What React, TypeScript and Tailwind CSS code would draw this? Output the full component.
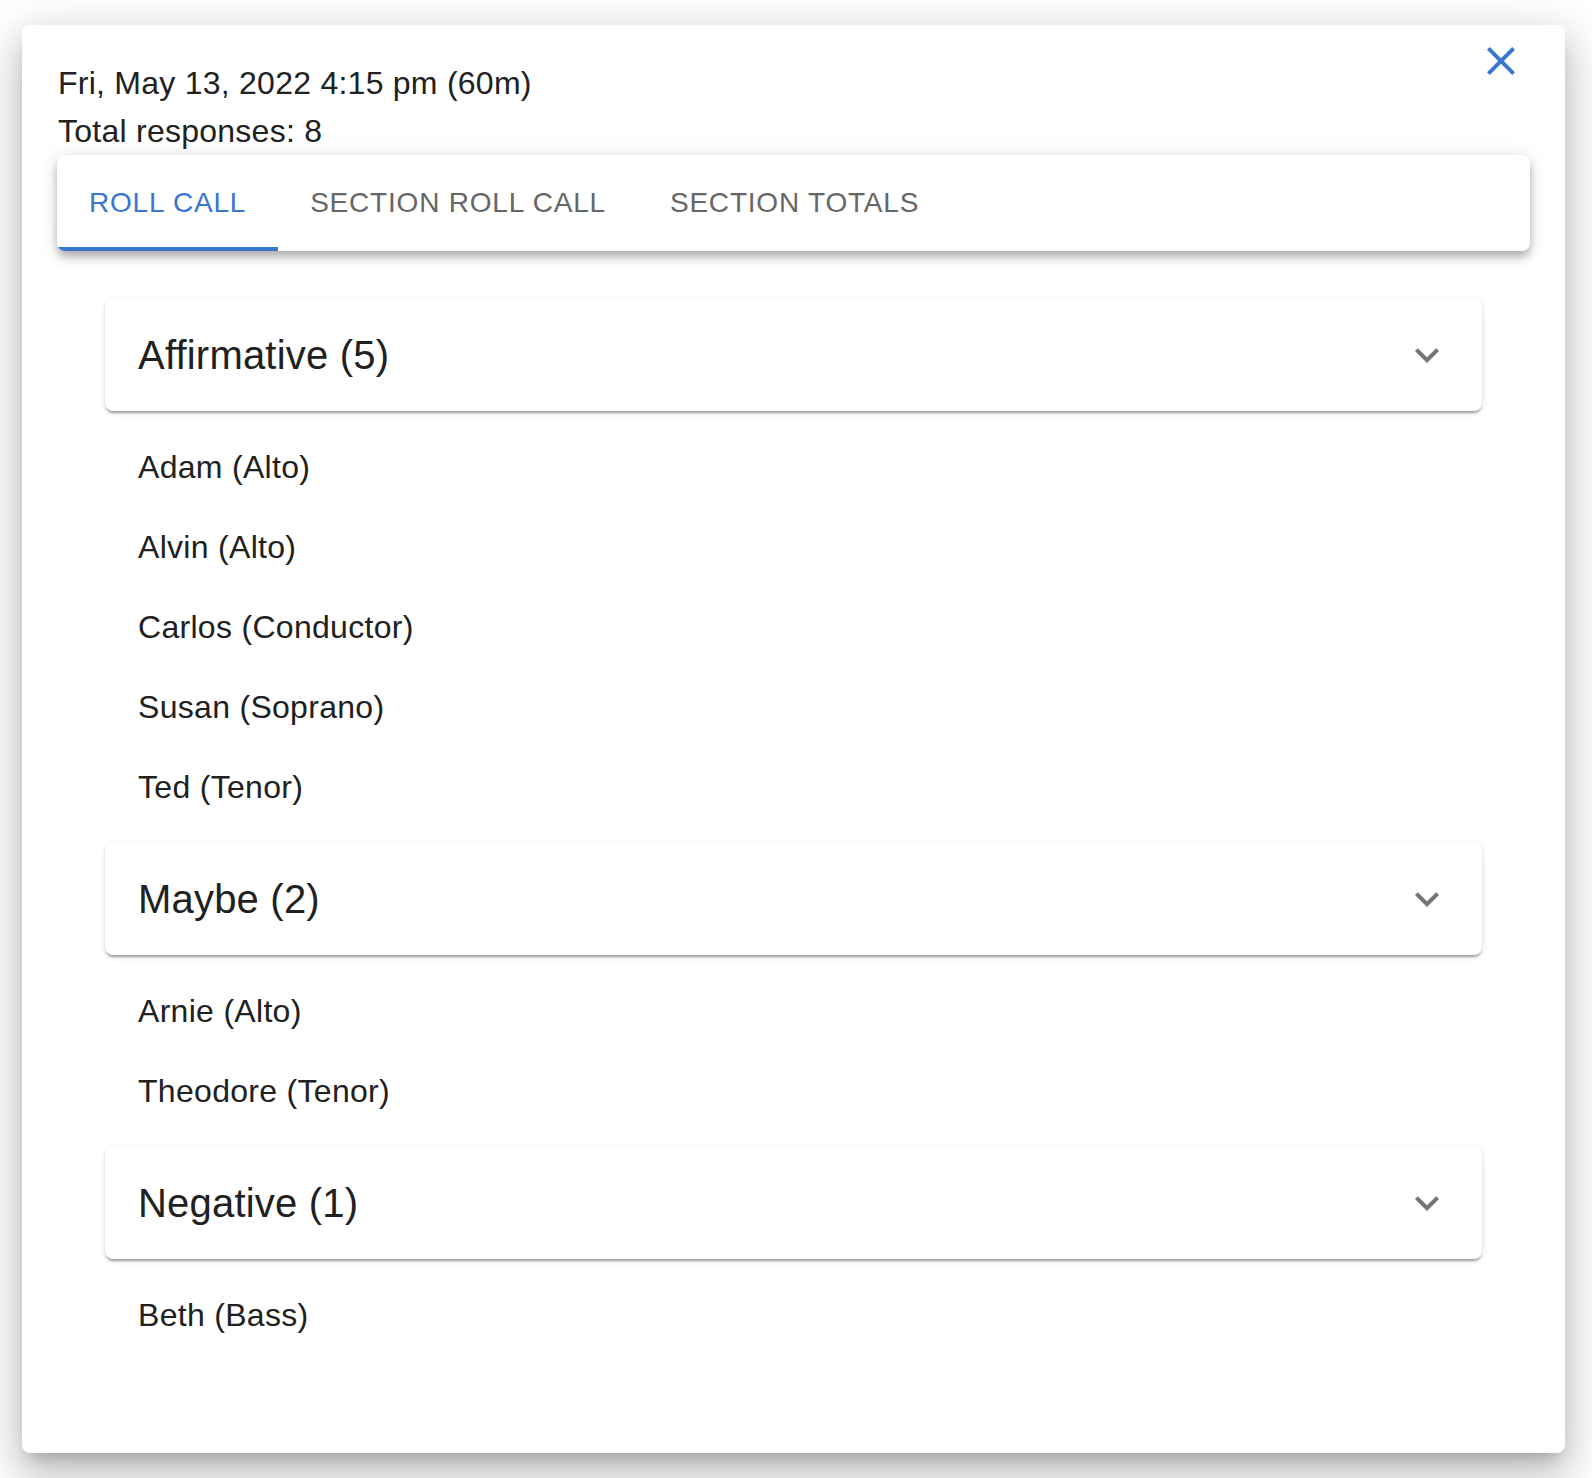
import type { JSX } from 'react'

interface Group {
  label: string
  members: string[]
}

const GROUPS: Group[] = [
  {
    label: 'Affirmative (5)',
    members: ['Adam (Alto)', 'Alvin (Alto)', 'Carlos (Conductor)', 'Susan (Soprano)', 'Ted (Tenor)'],
  },
  { label: 'Maybe (2)', members: ['Arnie (Alto)', 'Theodore (Tenor)'] },
  { label: 'Negative (1)', members: ['Beth (Bass)'] },
]

const TABS = ['ROLL CALL', 'SECTION ROLL CALL', 'SECTION TOTALS']

function CloseIcon(): JSX.Element {
  return (
    <svg viewBox="0 0 24 24" className="h-12 w-12 fill-[#3976d0]">
      <path d="M19 6.41 17.59 5 12 10.59 6.41 5 5 6.41 10.59 12 5 17.59 6.41 19 12 13.41 17.59 19 19 17.59 13.41 12z" />
    </svg>
  )
}

function ExpandIcon(): JSX.Element {
  return (
    <svg viewBox="0 0 24 24" className="h-12 w-12 fill-[#757575]">
      <path d="M16.59 8.59 12 13.17 7.41 8.59 6 10l6 6 6-6z" />
    </svg>
  )
}

function GroupSection({ group }: { group: Group }): JSX.Element {
  return (
    <section>
      <div className="flex h-[112px] items-center justify-between rounded-lg bg-white pl-[33px] pr-[31px] shadow-[0_4px_2px_-2px_rgba(0,0,0,0.2),0_2px_2px_0_rgba(0,0,0,0.14),0_2px_6px_0_rgba(0,0,0,0.12)]">
        <h3 className="text-[40px] tracking-[0.2px] text-[#212121]">{group.label}</h3>
        <ExpandIcon />
      </div>
      <ul className="py-4">
        {group.members.map((name) => (
          <li
            key={name}
            className="flex h-20 items-center pl-[33px] text-[32px] tracking-[0.3px] text-[#212121]"
          >
            {name}
          </li>
        ))}
      </ul>
    </section>
  )
}

export default function App(): JSX.Element {
  return (
    <div className="min-h-[1478px] bg-white pl-[22px] pt-[25px] font-['Liberation_Sans',Arial,sans-serif]">
      <div className="relative h-[1428px] w-[1543px] rounded-lg bg-white pt-[34px] shadow-[0_11px_15px_-7px_rgba(0,0,0,0.2),0_24px_38px_3px_rgba(0,0,0,0.14),0_9px_46px_8px_rgba(0,0,0,0.12)]">
        <button type="button" aria-label="Close" className="absolute right-[40px] top-[12px]">
          <CloseIcon />
        </button>

        <div className="px-[36px] text-[32px] leading-[48px] tracking-[0.25px] text-[#212121]">
          <p>Fri, May 13, 2022 4:15 pm (60m)</p>
          <p>Total responses: 8</p>
        </div>

        <nav className="mx-[35px] flex h-24 overflow-hidden rounded-lg bg-white shadow-[0_4px_8px_-2px_rgba(0,0,0,0.2),0_8px_10px_0_rgba(0,0,0,0.14),0_2px_20px_0_rgba(0,0,0,0.12)]">
          {TABS.map((tab, i) => (
            <div
              key={tab}
              className={
                i === 0
                  ? 'flex items-center border-b-4 border-[#3976d0] px-8 pt-1 text-[28px] tracking-[0.8px] text-[#3976d0]'
                  : 'flex items-center px-8 text-[28px] tracking-[0.8px] text-[#666666]'
              }
            >
              {tab}
            </div>
          ))}
        </nav>

        <div className="mx-[83px] mt-[48px]">
          {GROUPS.map((group) => (
            <GroupSection key={group.label} group={group} />
          ))}
        </div>
      </div>
    </div>
  )
}
